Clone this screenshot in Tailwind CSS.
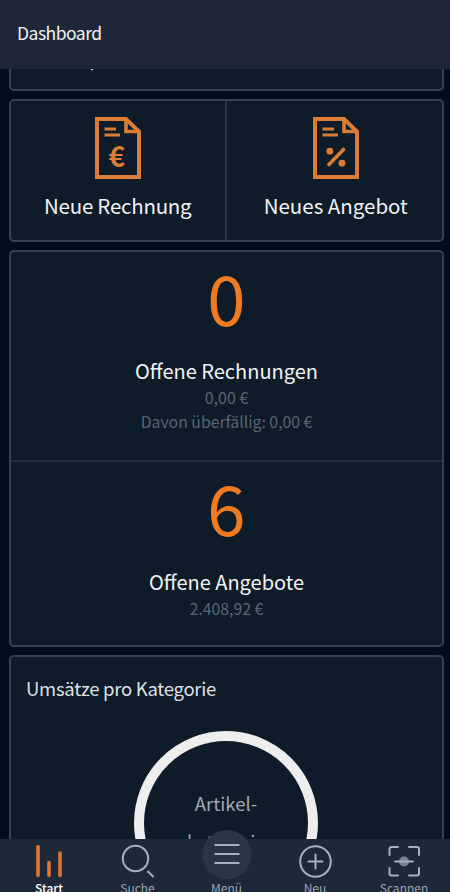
<!DOCTYPE html>
<html lang="de">
<head>
  <meta charset="UTF-8">
  <meta name="viewport" content="width=device-width, initial-scale=1.0">
  <title>Dashboard</title>
  <script src="https://cdn.jsdelivr.net/npm/@tailwindcss/browser@4"></script>
</head>
<body class="h-[892px] overflow-hidden bg-[#020d1b] font-['Noto_Sans_CJK_SC',sans-serif] text-[#f1f3f6]">
  <div class="flex h-[892px] flex-col overflow-hidden">
    <header class="flex h-[69px] shrink-0 items-center bg-[#1d2737] pb-[3px] pl-[17px]">
      <h1 class="text-[17.5px] leading-6 tracking-[-0.5px]">Dashboard</h1>
    </header>

    <main class="flex min-h-0 flex-1 flex-col gap-2 overflow-hidden pr-[6px] pl-[9px]">
      <section class="h-[22px] shrink-0 overflow-hidden rounded-b-[5px] border-2 border-t-0 border-[#35424f] bg-[#0e1b28]">
        <p class="-mt-[20px] ml-[79px] text-[18px] leading-5">,</p>
      </section>

      <section class="grid h-[143px] shrink-0 grid-cols-2 rounded-[5px] border-2 border-[#35424f] bg-[#0e1b28]">
        <a class="flex flex-col items-center border-r-2 border-[#273440] pt-4">
          <svg class="h-[62px] w-[46px]" viewBox="0 0 46 62" fill="none" stroke="#dc7d37" stroke-width="4">
            <path d="M2 2H31L44 14.5V60H2Z"/>
            <path d="M31 2V14.5H44" stroke-width="3.6"/>
            <path d="M9.5 12H21M9.5 18H25" stroke-width="3"/>
            <text x="13.5" y="50" font-size="28" font-weight="700" font-family="Noto Sans CJK SC" fill="#dc7d37" stroke="none">€</text>
          </svg>
          <span class="mt-[10px] text-[20.5px] leading-8 tracking-[-0.25px]">Neue Rechnung</span>
        </a>
        <a class="flex flex-col items-center pt-4 pl-[3px]">
          <svg class="h-[62px] w-[46px]" viewBox="0 0 46 62" fill="none" stroke="#dc7d37" stroke-width="4">
            <path d="M2 2H31L44 14.5V60H2Z"/>
            <path d="M31 2V14.5H44" stroke-width="3.6"/>
            <path d="M9.5 12H21M9.5 18H25" stroke-width="3"/>
            <path d="M16 47.5L30.5 32.5" stroke-width="3.6" stroke-linecap="round"/>
            <circle cx="16.8" cy="34.2" r="3.4" fill="#dc7d37" stroke="none"/>
            <circle cx="29" cy="46.2" r="3.4" fill="#dc7d37" stroke="none"/>
          </svg>
          <span class="mt-[10px] text-[20.5px] leading-8">Neues Angebot</span>
        </a>
      </section>

      <section class="flex h-[397px] shrink-0 flex-col rounded-[5px] border-2 border-[#35424f] bg-[#0e1b28] text-center">
        <div class="h-[210px] border-b-2 border-[#22303c] pt-[5px]">
          <p class="text-[69px] leading-[78px] text-[#f07a20]">0</p>
          <h2 class="mt-[22px] text-[20px] leading-7">Offene Rechnungen</h2>
          <p class="text-[16px] leading-6 text-[#5a6571]">0,00 €</p>
          <p class="pt-px text-[15.8px] leading-6 text-[#5a6571]">Davon überfällig: 0,00 €</p>
        </div>
        <div class="pt-[5px]">
          <p class="text-[69px] leading-[78px] text-[#f07a20]">6</p>
          <h2 class="mt-[23px] text-[20px] leading-7">Offene Angebote</h2>
          <p class="pt-px text-[15.8px] leading-6 text-[#5a6571]">2.408,92 €</p>
        </div>
      </section>

      <section class="h-[300px] shrink-0 rounded-[5px] border-2 border-[#35424f] bg-[#0e1b28]">
        <h2 class="mt-[17px] ml-[15px] text-[18.5px] leading-7 tracking-[-0.27px] text-[#dde1e6]">Umsätze pro Kategorie</h2>
        <div class="mt-[29px] ml-[123px] h-[184px] w-[184px] rounded-full border-[10px] border-[#eeeeee] pt-[44px] text-center text-[18.5px] leading-[37px] text-[#a0a8b2]">
          <p>Artikel-</p>
          <p class="pt-px tracking-[-0.3px]">kategorie</p>
        </div>
      </section>
    </main>

    <nav class="grid h-[53px] shrink-0 grid-cols-[98px_79px_99px_78px_100px] bg-[#1d2838] text-center text-[12px] leading-4 text-[#99a3b1]">
      <a class="flex flex-col items-center pt-[5px] font-medium text-white">
        <svg class="h-9 w-9 shrink-0" viewBox="0 0 36 36" stroke="#dc7631" stroke-width="3.6" stroke-linecap="round">
          <path d="M7 2.500V31.500M18 18.500V31.500M29 9V31.500"/>
        </svg>
        <span>Start</span>
      </a>
      <a class="flex flex-col items-center pt-[5px]">
        <svg class="h-9 w-9 shrink-0" viewBox="0 0 36 36" fill="none" stroke="#a6b0be" stroke-width="2" stroke-linecap="round">
          <circle cx="15.500" cy="14.500" r="12.700"/>
          <path d="M28 27.500L33 32.500"/>
        </svg>
        <span>Suche</span>
      </a>
      <a class="relative flex flex-col items-center pt-[41px]">
        <span class="absolute -top-[9.500px] left-1/2 flex h-[49px] w-[49px] -translate-x-1/2 flex-col items-center justify-center gap-[7px] rounded-full bg-[#2a3545]">
          <i class="h-[2px] w-[25px] bg-[#a6b0be]"></i>
          <i class="h-[2px] w-[25px] bg-[#a6b0be]"></i>
          <i class="h-[2px] w-[25px] bg-[#a6b0be]"></i>
        </span>
        <span>Menü</span>
      </a>
      <a class="flex flex-col items-center pt-[5px]">
        <svg class="h-9 w-9 shrink-0" viewBox="0 0 36 36" fill="none" stroke="#a6b0be" stroke-width="2" stroke-linecap="round">
          <circle cx="18.500" cy="17.500" r="15.300"/>
          <path d="M18.500 10.500V24.500M11.500 17.500H25.500"/>
        </svg>
        <span>Neu</span>
      </a>
      <a class="flex flex-col items-center pt-[5px]">
        <svg class="h-9 w-9 shrink-0" viewBox="0 0 36 36" fill="none" stroke="#a6b0be" stroke-width="2" stroke-linecap="round">
          <path d="M3.500 11V5Q3.500 3 5.500 3H12M23 3H31Q33 3 33 5V11M33 24V29.500Q33 31.500 31 31.500H23M12 31.500H5.500Q3.500 31.500 3.500 29.500V24"/>
          <circle cx="18" cy="17.500" r="5" fill="#78828f" stroke="none"/>
          <path d="M9 17.500H27"/>
        </svg>
        <span>Scannen</span>
      </a>
    </nav>
  </div>
</body>
</html>
